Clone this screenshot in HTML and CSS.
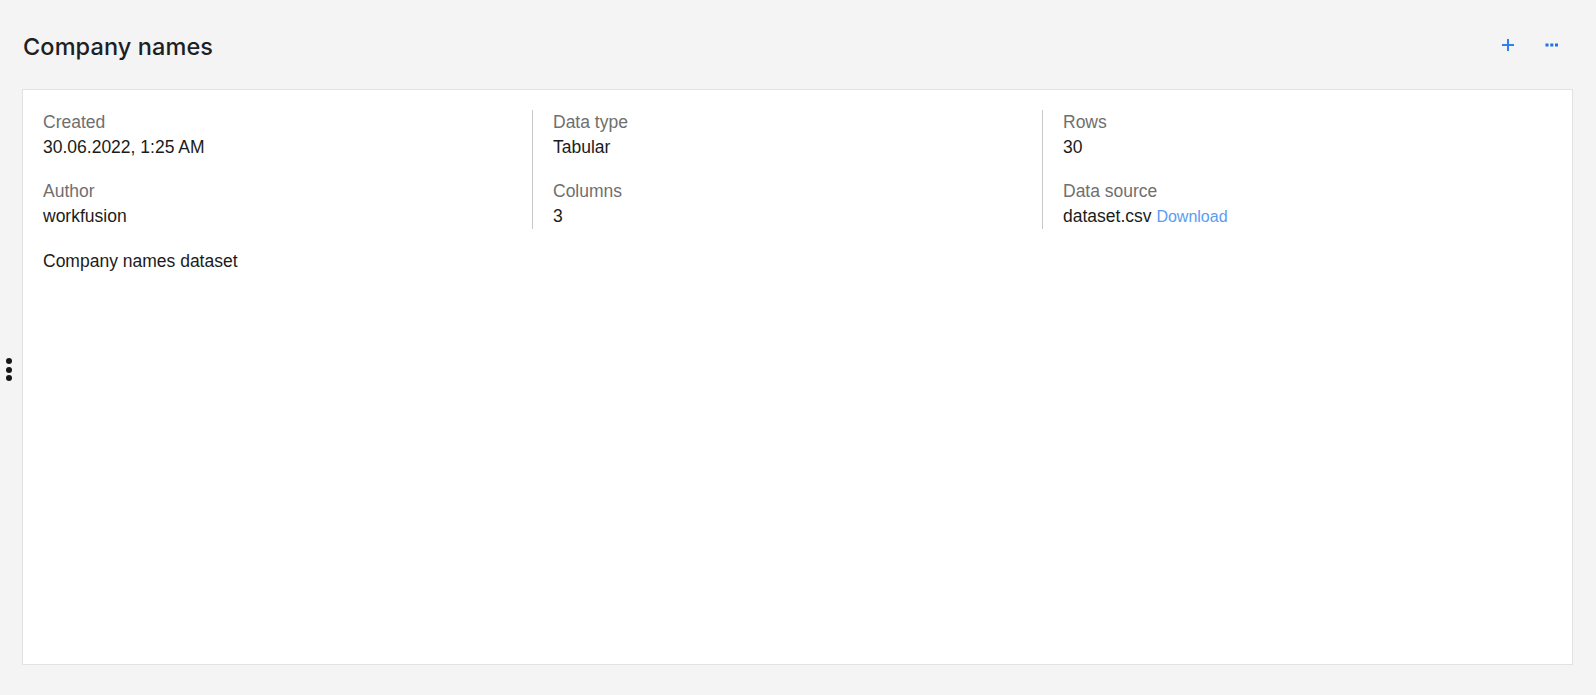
FILE: index.html
```html
<!DOCTYPE html>
<html lang="en">
<head>
<meta charset="utf-8">
<title>Company names</title>
<link rel="stylesheet" href="styles.css">
</head>
<body>
  <div class="page">
    <header class="page-header">
      <h1 class="page-title">Company names</h1>
      <div class="header-actions">
        <button class="icon-btn" type="button" aria-label="Add">
          <svg width="12" height="12" viewBox="0 0 12 12"><path d="M6 0v12M0 6h12" stroke="#2f80ed" stroke-width="2" fill="none"/></svg>
        </button>
        <button class="icon-btn" type="button" aria-label="More">
          <svg width="14" height="4" viewBox="0 0 14 4"><rect x="0.5" y="0.5" width="3" height="3" fill="#1a73e8"/><rect x="5.3" y="0.5" width="3" height="3" fill="#1a73e8"/><rect x="10" y="0.5" width="3" height="3" fill="#1a73e8"/></svg>
        </button>
      </div>
    </header>

    <section class="card">
      <div class="meta-grid">
        <div class="meta-col">
          <div class="field">
            <div class="field-label">Created</div>
            <div class="field-value">30.06.2022, 1:25 AM</div>
          </div>
          <div class="field">
            <div class="field-label">Author</div>
            <div class="field-value">workfusion</div>
          </div>
        </div>
        <div class="meta-col">
          <div class="field">
            <div class="field-label">Data type</div>
            <div class="field-value">Tabular</div>
          </div>
          <div class="field">
            <div class="field-label">Columns</div>
            <div class="field-value">3</div>
          </div>
        </div>
        <div class="meta-col">
          <div class="field">
            <div class="field-label">Rows</div>
            <div class="field-value">30</div>
          </div>
          <div class="field">
            <div class="field-label">Data source</div>
            <div class="field-value">dataset.csv <a class="link" href="#">Download</a></div>
          </div>
        </div>
      </div>
      <p class="description">Company names dataset</p>
    </section>
  </div>

  <div class="resize-handle" aria-hidden="true">
    <span></span><span></span><span></span>
  </div>
</body>
</html>
```

FILE: styles.css
```css
* {
  box-sizing: content-box;
}

html, body {
  margin: 0;
  height: 100%;
}

body {
  background: #f4f4f4;
  font-family: "Liberation Sans", Arial, sans-serif;
  color: #1d1d1f;
}

.page {
  padding: 0 23px 30px 22px;
}

.page-header {
  height: 89px;
  display: flex;
  align-items: center;
  justify-content: space-between;
}

.page-title {
  margin: 0 0 0 1px;
  font-family: Inter, "Noto Sans", sans-serif;
  font-weight: 500;
  font-size: 23.5px;
  letter-spacing: 0.1px;
  color: #1c1f26;
  line-height: 30px;
  padding-top: 4px;
}

.header-actions {
  display: flex;
  align-items: center;
  gap: 24px;
  margin-right: 11px;
}

.icon-btn {
  border: 0;
  background: none;
  padding: 0;
  display: flex;
  align-items: center;
  justify-content: center;
  width: 20px;
  height: 20px;
  cursor: pointer;
}

.card {
  background: #fff;
  border: 1px solid #e2e2e2;
  padding: 20px;
  height: 534px;
}

.meta-grid {
  display: flex;
}

.meta-col {
  flex: 1 1 0;
  padding-right: 20px;
  display: flex;
  flex-direction: column;
  gap: 20px;
}

.meta-col + .meta-col {
  border-left: 1px solid #c8c8c8;
  padding-left: 20px;
}

.field {
  display: flex;
  flex-direction: column;
  gap: 1px;
  font-size: 17.5px;
  line-height: 24px;
}

.field-label {
  color: #6f6f6f;
}

.field-value {
  color: #1b1b1b;
}

.link {
  color: #5b9cf2;
  text-decoration: none;
  font-size: 16px;
}

.description {
  margin: 20px 0 0;
  font-size: 17.5px;
  line-height: 24px;
  color: #1b1b22;
}

.resize-handle {
  position: absolute;
  left: 6px;
  top: 358px;
  display: flex;
  flex-direction: column;
  gap: 2.5px;
}

.resize-handle span {
  width: 6px;
  height: 6px;
  border-radius: 50%;
  background: #161616;
}
```
